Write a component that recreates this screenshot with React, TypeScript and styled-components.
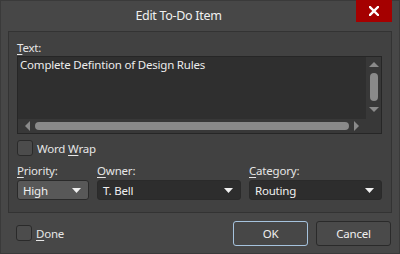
import styled, { createGlobalStyle } from "styled-components";

const GlobalStyle = createGlobalStyle`
  html, body {
    margin: 0;
    padding: 0;
    background: #474747;
  }
  body {
    font-family: "Noto Sans", "Open Sans", sans-serif;
    font-size: 11.5px;
    letter-spacing: -0.2px;
    color: #e6e6e6;
  }
`;

const Window = styled.div`
  width: 400px;
  height: 254px;
  box-sizing: border-box;
  background: #474747;
  border: 1px solid #3a3a3a;
  display: flex;
  flex-direction: column;
`;

const TitleBar = styled.div`
  height: 30px;
  display: grid;
  grid-template-columns: 1fr 36px;
  margin-right: 7px;
  align-items: start;
`;

const Title = styled.div`
  text-align: center;
  font-size: 12.5px;
  letter-spacing: -0.3px;
  line-height: 30px;
  color: #f0f0f0;
`;

const CloseButton = styled.div`
  width: 36px;
  height: 22px;
  margin-top: -1px;
  background: #a50000;
  display: flex;
  align-items: center;
  justify-content: center;
`;

const Panel = styled.div`
  margin: 0 7px;
  height: 182px;
  box-sizing: border-box;
  background: #414141;
  border: 1px solid #333333;
  padding: 8px 9px 0 8px;
  display: flex;
  flex-direction: column;
`;

const Label = styled.div`
  line-height: 16px;
  height: 16px;
  white-space: nowrap;
  color: #e6e6e6;
  u {
    text-decoration: underline;
    text-underline-offset: 2px;
  }
`;

const TextBox = styled.div`
  height: 78px;
  box-sizing: border-box;
  border: 1px solid #262626;
  background: #2f2f2f;
  display: grid;
  grid-template-columns: 1fr 15px;
  grid-template-rows: 1fr 14px;
`;

const TextContent = styled.div`
  padding: 0 2px;
  line-height: 16px;
  color: #ececec;
`;

const VScroll = styled.div`
  background: #383838;
  display: flex;
  flex-direction: column;
  align-items: center;
  padding: 5px 0 3px;
`;

const VThumb = styled.div`
  width: 8px;
  height: 28px;
  margin: 6px 0 6px;
  border-radius: 4px;
  background: #8a8a8a;
`;

const HScroll = styled.div`
  background: #383838;
  display: flex;
  align-items: center;
  padding: 0 7px 0 7px;
`;

const HThumb = styled.div`
  flex: 1;
  height: 8px;
  margin: 0 5px 0 5px;
  border-radius: 4px;
  background: #8a8a8a;
`;

const Corner = styled.div`
  background: #383838;
`;

const CheckRow = styled.label<{ $top: number }>`
  display: flex;
  align-items: center;
  gap: 4px;
  margin-top: ${(p) => p.$top}px;
  height: 16px;
  u {
    text-decoration: underline;
    text-underline-offset: 2px;
  }
`;

const CheckBox = styled.span`
  width: 14px;
  height: 14px;
  border: 1px solid #2a2a2a;
  border-radius: 3px;
  background: #4c4c4c;
`;

const Fields = styled.div`
  margin-top: 7px;
  display: grid;
  grid-template-columns: 72px 144px 1fr;
  column-gap: 8px;
`;

const Field = styled.div`
  display: flex;
  flex-direction: column;
  gap: 1px;
`;

const Combo = styled.div<{ $editable?: boolean }>`
  height: 20px;
  box-sizing: border-box;
  border: 1px solid #2a2a2a;
  border-radius: 3px;
  background: ${(p) => (p.$editable ? "#2d2d2d" : "#585858")};
  display: flex;
  align-items: center;
  justify-content: space-between;
  padding: 0 7px 0 5px;
  color: #f0f0f0;
`;

const Footer = styled.div`
  flex: 1;
  display: flex;
  align-items: center;
  padding: 0 8px 0 15px;
`;

const Spacer = styled.div`
  flex: 1;
`;

const Button = styled.div<{ $default?: boolean }>`
  width: 75px;
  height: 25px;
  box-sizing: border-box;
  margin-left: 8px;
  border-radius: 3px;
  border: 1px solid ${(p) => (p.$default ? "#a6c3de" : "#2a2a2a")};
  background: ${(p) => (p.$default ? "#474747" : "#4a4a4a")};
  display: flex;
  align-items: center;
  justify-content: center;
  color: #f0f0f0;
`;

function Arrow({ dir, color = "#8a8a8a" }: { dir: "up" | "down" | "left" | "right"; color?: string }) {
  const pts = {
    up: "0,5 5,0 10,5",
    down: "0,0 10,0 5,5",
    left: "5,0 5,10 0,5",
    right: "0,0 0,10 5,5",
  }[dir];
  const vertical = dir === "up" || dir === "down";
  return (
    <svg width={vertical ? 10 : 5} height={vertical ? 5 : 10} viewBox={vertical ? "0 0 10 5" : "0 0 5 10"}>
      <polygon points={pts} fill={color} />
    </svg>
  );
}

function Dropdown({ value, editable }: { value: string; editable?: boolean }) {
  return (
    <Combo $editable={editable}>
      <span>{value}</span>
      <svg width="9" height="5" viewBox="0 0 9 5">
        <polygon points="0,0 9,0 4.5,5" fill="#f0f0f0" />
      </svg>
    </Combo>
  );
}

export default function App() {
  return (
    <>
      <GlobalStyle />
      <Window>
        <TitleBar>
          <Title>Edit To-Do Item</Title>
          <CloseButton>
            <svg width="10" height="10" viewBox="0 0 10 10">
              <path d="M1 1 L9 9 M9 1 L1 9" stroke="#ffffff" strokeWidth="2.4" strokeLinecap="square" />
            </svg>
          </CloseButton>
        </TitleBar>
        <Panel>
          <Label>
            <u>T</u>ext:
          </Label>
          <TextBox>
            <TextContent>Complete Defintion of Design Rules</TextContent>
            <VScroll>
              <Arrow dir="up" />
              <VThumb />
              <Arrow dir="down" />
            </VScroll>
            <HScroll>
              <Arrow dir="left" />
              <HThumb />
              <Arrow dir="right" />
            </HScroll>
            <Corner />
          </TextBox>
          <CheckRow $top={6}>
            <CheckBox />
            <span>
              Word <u>W</u>rap
            </span>
          </CheckRow>
          <Fields>
            <Field>
              <Label>
                <u>P</u>riority:
              </Label>
              <Dropdown value="High" />
            </Field>
            <Field>
              <Label>
                <u>O</u>wner:
              </Label>
              <Dropdown value="T. Bell" editable />
            </Field>
            <Field>
              <Label>
                <u>C</u>ategory:
              </Label>
              <Dropdown value="Routing" editable />
            </Field>
          </Fields>
        </Panel>
        <Footer>
          <CheckRow $top={0}>
            <CheckBox />
            <span>
              <u>D</u>one
            </span>
          </CheckRow>
          <Spacer />
          <Button $default>OK</Button>
          <Button>Cancel</Button>
        </Footer>
      </Window>
    </>
  );
}
